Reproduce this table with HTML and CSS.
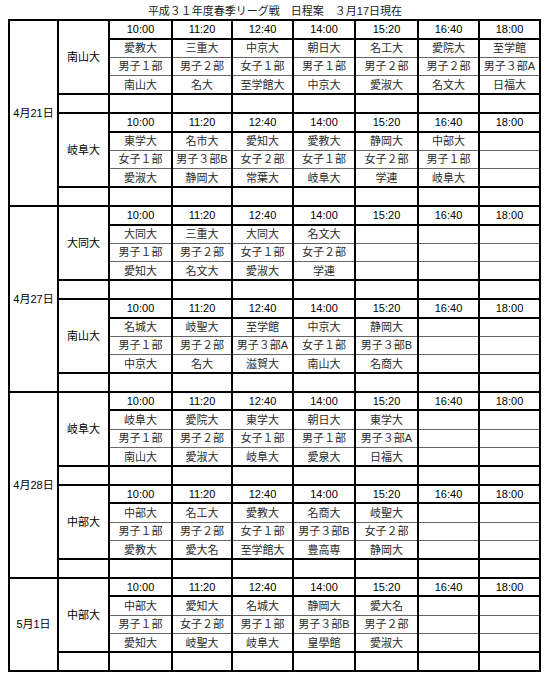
FILE: index.html
```html
<!DOCTYPE html>
<html lang="ja">
<head>
<meta charset="utf-8">
<title>日程案</title>
<link rel="stylesheet" href="styles.css">
</head>
<body>
<div class="title">平成３１年度春季リーグ戦　日程案　３月17日現在</div>
<table class="sched">
<colgroup>
<col class="c-date"><col class="c-venue">
<col class="c1"><col class="c2"><col class="c3"><col class="c4"><col class="c5"><col class="c6"><col class="c7">
</colgroup>

<tbody>
<tr class="time"><td class="date" rowspan="10">4月21日</td><td class="venue" rowspan="4">南山大</td><td>10:00</td><td>11:20</td><td>12:40</td><td>14:00</td><td>15:20</td><td>16:40</td><td>18:00</td></tr>
<tr class="t1"><td>愛教大</td><td>三重大</td><td>中京大</td><td>朝日大</td><td>名工大</td><td>愛院大</td><td>至学館</td></tr>
<tr class="dv"><td>男子１部</td><td>男子２部</td><td>女子１部</td><td>男子１部</td><td>男子２部</td><td>男子２部</td><td>男子３部A</td></tr>
<tr class="t2"><td>南山大</td><td>名大</td><td>至学館大</td><td>中京大</td><td>愛淑大</td><td>名文大</td><td>日福大</td></tr>
<tr class="empty"><td></td><td></td><td></td><td></td><td></td><td></td><td></td><td></td></tr>
<tr class="time"><td class="venue" rowspan="4">岐阜大</td><td>10:00</td><td>11:20</td><td>12:40</td><td>14:00</td><td>15:20</td><td>16:40</td><td>18:00</td></tr>
<tr class="t1"><td>東学大</td><td>名市大</td><td>愛知大</td><td>愛教大</td><td>静岡大</td><td>中部大</td><td></td></tr>
<tr class="dv"><td>女子１部</td><td>男子３部B</td><td>女子２部</td><td>女子１部</td><td>女子２部</td><td>男子１部</td><td></td></tr>
<tr class="t2"><td>愛淑大</td><td>静岡大</td><td>常葉大</td><td>岐阜大</td><td>学連</td><td>岐阜大</td><td></td></tr>
<tr class="empty"><td></td><td></td><td></td><td></td><td></td><td></td><td></td><td></td></tr>
</tbody>

<tbody>
<tr class="time"><td class="date" rowspan="10">4月27日</td><td class="venue" rowspan="4">大同大</td><td>10:00</td><td>11:20</td><td>12:40</td><td>14:00</td><td>15:20</td><td>16:40</td><td>18:00</td></tr>
<tr class="t1"><td>大同大</td><td>三重大</td><td>大同大</td><td>名文大</td><td></td><td></td><td></td></tr>
<tr class="dv"><td>男子１部</td><td>男子２部</td><td>女子１部</td><td>女子２部</td><td></td><td></td><td></td></tr>
<tr class="t2"><td>愛知大</td><td>名文大</td><td>愛淑大</td><td>学連</td><td></td><td></td><td></td></tr>
<tr class="empty"><td></td><td></td><td></td><td></td><td></td><td></td><td></td><td></td></tr>
<tr class="time"><td class="venue" rowspan="4">南山大</td><td>10:00</td><td>11:20</td><td>12:40</td><td>14:00</td><td>15:20</td><td>16:40</td><td>18:00</td></tr>
<tr class="t1"><td>名城大</td><td>岐聖大</td><td>至学館</td><td>中京大</td><td>静岡大</td><td></td><td></td></tr>
<tr class="dv"><td>男子１部</td><td>男子２部</td><td>男子３部A</td><td>女子１部</td><td>男子３部B</td><td></td><td></td></tr>
<tr class="t2"><td>中京大</td><td>名大</td><td>滋賀大</td><td>南山大</td><td>名商大</td><td></td><td></td></tr>
<tr class="empty"><td></td><td></td><td></td><td></td><td></td><td></td><td></td><td></td></tr>
</tbody>

<tbody>
<tr class="time"><td class="date" rowspan="10">4月28日</td><td class="venue" rowspan="4">岐阜大</td><td>10:00</td><td>11:20</td><td>12:40</td><td>14:00</td><td>15:20</td><td>16:40</td><td>18:00</td></tr>
<tr class="t1"><td>岐阜大</td><td>愛院大</td><td>東学大</td><td>朝日大</td><td>東学大</td><td></td><td></td></tr>
<tr class="dv"><td>男子１部</td><td>男子２部</td><td>女子１部</td><td>男子１部</td><td>男子３部A</td><td></td><td></td></tr>
<tr class="t2"><td>南山大</td><td>愛淑大</td><td>岐阜大</td><td>愛泉大</td><td>日福大</td><td></td><td></td></tr>
<tr class="empty"><td></td><td></td><td></td><td></td><td></td><td></td><td></td><td></td></tr>
<tr class="time"><td class="venue" rowspan="4">中部大</td><td>10:00</td><td>11:20</td><td>12:40</td><td>14:00</td><td>15:20</td><td>16:40</td><td>18:00</td></tr>
<tr class="t1"><td>中部大</td><td>名工大</td><td>愛教大</td><td>名商大</td><td>岐聖大</td><td></td><td></td></tr>
<tr class="dv"><td>男子１部</td><td>男子２部</td><td>女子１部</td><td>男子３部B</td><td>女子２部</td><td></td><td></td></tr>
<tr class="t2"><td>愛教大</td><td>愛大名</td><td>至学館大</td><td>豊高専</td><td>静岡大</td><td></td><td></td></tr>
<tr class="empty"><td></td><td></td><td></td><td></td><td></td><td></td><td></td><td></td></tr>
</tbody>

<tbody>
<tr class="time"><td class="date" rowspan="5">5月1日</td><td class="venue" rowspan="4">中部大</td><td>10:00</td><td>11:20</td><td>12:40</td><td>14:00</td><td>15:20</td><td>16:40</td><td>18:00</td></tr>
<tr class="t1"><td>中部大</td><td>愛知大</td><td>名城大</td><td>静岡大</td><td>愛大名</td><td></td><td></td></tr>
<tr class="dv"><td>男子１部</td><td>女子２部</td><td>男子１部</td><td>男子３部B</td><td>男子２部</td><td></td><td></td></tr>
<tr class="t2"><td>愛知大</td><td>岐聖大</td><td>岐阜大</td><td>皇學館</td><td>愛淑大</td><td></td><td></td></tr>
<tr class="empty"><td></td><td></td><td></td><td></td><td></td><td></td><td></td><td></td></tr>
</tbody>
</table>
</body>
</html>
```

FILE: styles.css
```css
html, body {
  margin: 0;
  padding: 0;
  background: #fff;
}

body {
  font-family: "Liberation Sans", "Noto Sans CJK JP", sans-serif;
  color: #2b2b2b;
  width: 550px;
}

.title {
  box-sizing: border-box;
  height: 19px;
  padding-top: 5px;
  font-size: 11px;
  line-height: 12px;
  text-align: center;
  color: #222;
}

.sched {
  border-collapse: collapse;
  table-layout: fixed;
  width: 531px;
  margin-left: 8px;
}

.c-date { width: 49px; }
.c-venue { width: 51px; }
.c1 { width: 63px; }
.c2 { width: 60px; }
.c3 { width: 61px; }
.c4 { width: 62px; }
.c5 { width: 63px; }
.c6 { width: 61px; }
.c7 { width: 61px; }

.sched tr {
  height: 18.6px;
}

.sched td {
  border: 2px solid #000;
  padding: 0;
  text-align: center;
  vertical-align: middle;
  font-size: 11px;
  line-height: 12px;
  white-space: nowrap;
  overflow: hidden;
}

.sched tr.time td {
  color: #000;
}

.sched tr.t1 td {
  border-bottom: 1px solid #666;
}

.sched tr.dv td {
  border-top: 1px solid #666;
  border-bottom: 1px solid #666;
}

.sched tr.t2 td {
  border-top: 1px solid #666;
}

.sched td.date,
.sched td.venue {
  border: 2px solid #000;
  color: #222;
}
```
